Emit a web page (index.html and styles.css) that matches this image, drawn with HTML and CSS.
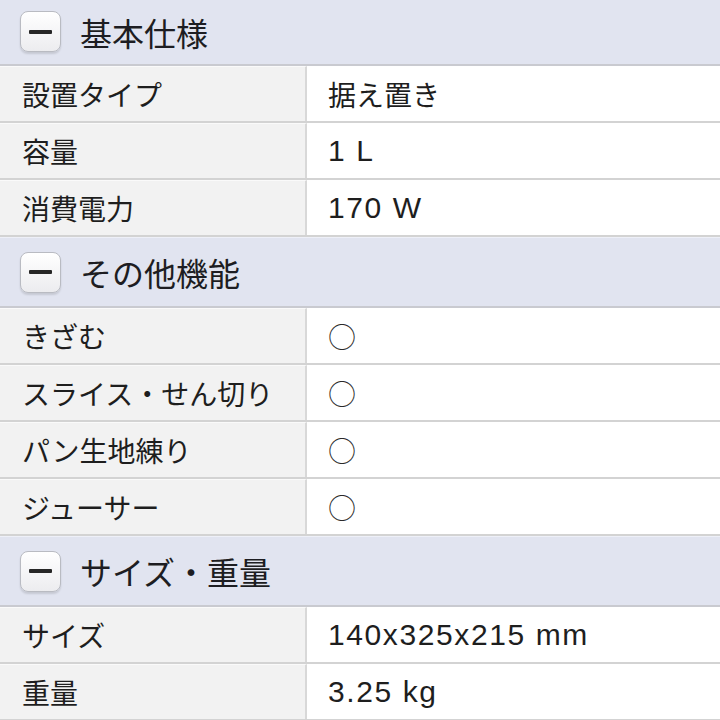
FILE: index.html
```html
<!DOCTYPE html>
<html lang="ja">
<head>
<meta charset="utf-8">
<link rel="stylesheet" href="styles.css">
</head>
<body>
<div class="spec">
  <section class="group">
    <div class="group-head"><span class="toggle"><span class="bar"></span></span><span class="title">基本仕様</span></div>
    <div class="row"><div class="label">設置タイプ</div><div class="value">据え置き</div></div>
    <div class="row"><div class="label">容量</div><div class="value"><span class="latin">1 L</span></div></div>
    <div class="row"><div class="label">消費電力</div><div class="value"><span class="latin">170 W</span></div></div>
  </section>
  <section class="group">
    <div class="group-head"><span class="toggle"><span class="bar"></span></span><span class="title">その他機能</span></div>
    <div class="row"><div class="label">きざむ</div><div class="value"><span class="mark">○</span></div></div>
    <div class="row"><div class="label">スライス・せん切り</div><div class="value"><span class="mark">○</span></div></div>
    <div class="row"><div class="label">パン生地練り</div><div class="value"><span class="mark">○</span></div></div>
    <div class="row"><div class="label">ジューサー</div><div class="value"><span class="mark">○</span></div></div>
  </section>
  <section class="group">
    <div class="group-head"><span class="toggle"><span class="bar"></span></span><span class="title">サイズ・重量</span></div>
    <div class="row"><div class="label">サイズ</div><div class="value"><span class="latin">140x325x215 mm</span></div></div>
    <div class="row"><div class="label">重量</div><div class="value"><span class="latin">3.25 kg</span></div></div>
  </section>
</div>
</body>
</html>
```
FILE: styles.css
```css
html, body {
  margin: 0;
  padding: 0;
  background: #ffffff;
  overflow: hidden;
}
body {
  font-family: "Noto Sans CJK JP", sans-serif;
  color: #1e1e1e;
}
.spec {
  margin-top: -3px;
  display: flex;
  flex-direction: column;
}
.group-head {
  height: 68px;
  display: flex;
  align-items: center;
  gap: 19px;
  padding-left: 20px;
  background: #e1e4f0;
  border-top: 1px solid #eef0f8;
  border-bottom: 2px solid #c9cad0;
}
.group:first-child .group-head {
  height: 65px;
  padding-top: 1px;
}
.toggle {
  width: 39px;
  height: 39px;
  border: 1px solid #b9bbc2;
  border-radius: 8px;
  background: linear-gradient(#ffffff, #ececef);
  box-shadow: 0 2px 2px rgba(0, 0, 0, 0.12);
  display: flex;
  align-items: center;
  justify-content: center;
}
.bar {
  width: 23px;
  height: 4px;
  border-radius: 1px;
  background: #262626;
}
.title {
  font-size: 32px;
  line-height: 1;
  color: #1d1d22;
}
.row {
  display: grid;
  grid-template-columns: 307px 1fr;
  height: 55px;
  border-bottom: 2px solid #d3d3d3;
}
.label {
  background: #f2f2f2;
  border-right: 2px solid #d8d8d8;
  border-top: 1px solid #fafafa;
  display: flex;
  align-items: center;
  padding-left: 22px;
  font-size: 28px;
  white-space: nowrap;
}
.value {
  display: flex;
  align-items: center;
  padding-left: 21px;
  font-size: 28px;
  white-space: nowrap;
}
.latin {
  font-family: "Liberation Sans", "Noto Sans CJK JP", sans-serif;
  font-size: 30px;
  letter-spacing: 1.6px;
}
.mark {
  font-size: 28px;
  font-weight: 300;
  color: #2a2a2a;
}
```
